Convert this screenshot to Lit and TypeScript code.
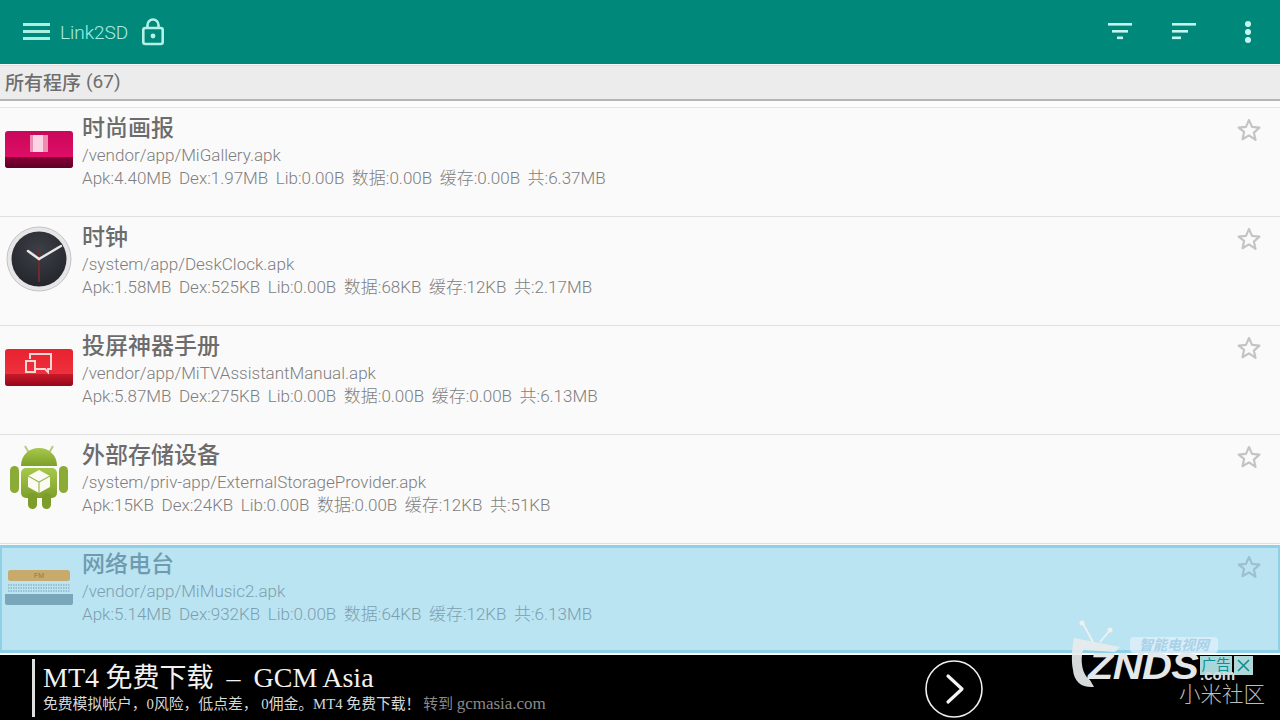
import { LitElement, html, css } from "lit";
import { customElement } from "lit/decorators.js";

const CJK = css`"Noto Sans CJK SC"`;

const iconMagazine = html`<svg viewBox="0 0 68 38" width="68" height="38"><defs><linearGradient id="m1" x1="0" y1="0" x2="0" y2="1"><stop offset="0" stop-color="#c8085a"/><stop offset="1" stop-color="#ea0f6e"/></linearGradient><linearGradient id="m2" x1="0" y1="0" x2="0" y2="1"><stop offset="0" stop-color="#8a0038"/><stop offset="1" stop-color="#5c0026"/></linearGradient></defs><rect width="68" height="37" rx="3" fill="url(#m1)"/><path d="M0 26h68v8a3 3 0 0 1-3 3H3a3 3 0 0 1-3-3z" fill="url(#m2)"/><rect x="25" y="4" width="18" height="17" fill="#f08cb4"/><rect x="28" y="4" width="10" height="17" fill="#fbd3e2"/></svg>`;

const iconClock = html`<svg viewBox="0 0 66 66" width="66" height="66"><defs><radialGradient id="c1" cx=".5" cy=".35" r=".8"><stop offset="0" stop-color="#3e4048"/><stop offset="1" stop-color="#1e2026"/></radialGradient></defs><circle cx="33" cy="33" r="32" fill="#e6e6e8" stroke="#c4c4c6"/><circle cx="33" cy="33" r="27.500" fill="url(#c1)"/><path d="M33 23V56" stroke="#6e2a2c" stroke-width="2" fill="none"/><path d="M33 33 55 20" stroke="#e8e8e8" stroke-width="2.400" stroke-linecap="round"/><path d="M33 33 22 25" stroke="#e8e8e8" stroke-width="2.600" stroke-linecap="round"/></svg>`;

const iconCast = html`<svg viewBox="0 0 68 38" width="68" height="38"><defs><linearGradient id="r1" x1="0" y1="0" x2="0" y2="1"><stop offset="0" stop-color="#e8222f"/><stop offset="1" stop-color="#f03844"/></linearGradient><linearGradient id="r2" x1="0" y1="0" x2="0" y2="1"><stop offset="0" stop-color="#c81a2a"/><stop offset="1" stop-color="#96061a"/></linearGradient></defs><rect width="68" height="37" rx="3" fill="url(#r1)"/><path d="M0 25h68v9a3 3 0 0 1-3 3H3a3 3 0 0 1-3-3z" fill="url(#r2)"/><path d="M25 10V5h21v15h-3v3l-3-3H31M21 12h9v11h-9z" fill="none" stroke="#f9d6d6" stroke-width="2"/></svg>`;

const iconAndroid = html`<svg viewBox="0 0 60 68" width="60" height="68"><defs><linearGradient id="a1" x1="0" y1="0" x2="0" y2="1"><stop offset="0" stop-color="#a6c84a"/><stop offset="1" stop-color="#7ea02c"/></linearGradient></defs><path d="M20 10 16 3M40 10l4-7" stroke="#b8cc80" stroke-width="2"/><path d="M12 23C12 12 20 5 30 5s18 7 18 18z" fill="url(#a1)"/><rect x="12" y="25" width="36" height="30" rx="5" fill="url(#a1)"/><rect x="1" y="23" width="9" height="27" rx="4.500" fill="#8aab36"/><rect x="50" y="23" width="9" height="27" rx="4.500" fill="#8aab36"/><rect x="19" y="50" width="9" height="16" rx="4.500" fill="#7c9c2c"/><rect x="33" y="50" width="9" height="16" rx="4.500" fill="#7c9c2c"/><path d="M30 27 41 33v11l-11 6-11-6V33z" fill="#fbfbf4"/><path d="M19 33l11 6 11-6M30 39v11" stroke="#9cba50" stroke-width="1.200" fill="none"/></svg>`;

const iconRadio = html`<svg viewBox="0 0 68 36" width="68" height="36"><rect x="3" y="0" width="62" height="11" rx="2.500" fill="#c8ab6c"/><text x="34" y="8" text-anchor="middle" font-size="7" font-family="Liberation Sans" fill="#8c7c50">FM</text><path d="M3 15h62M3 18h62M3 21h62" stroke="#8fb4c6" stroke-width="1.400" stroke-dasharray="1.500 1"/><path d="M0 24h68v9a2 2 0 0 1-2 2H2a2 2 0 0 1-2-2z" fill="#79a6b9"/></svg>`;

const apps = [
  { name: "时尚画报", path: "/vendor/app/MiGallery.apk", apk: "4.40MB", dex: "1.97MB", lib: "0.00B", data: "0.00B", cache: "0.00B", total: "6.37MB", icon: iconMagazine, sel: false },
  { name: "时钟", path: "/system/app/DeskClock.apk", apk: "1.58MB", dex: "525KB", lib: "0.00B", data: "68KB", cache: "12KB", total: "2.17MB", icon: iconClock, sel: false },
  { name: "投屏神器手册", path: "/vendor/app/MiTVAssistantManual.apk", apk: "5.87MB", dex: "275KB", lib: "0.00B", data: "0.00B", cache: "0.00B", total: "6.13MB", icon: iconCast, sel: false },
  { name: "外部存储设备", path: "/system/priv-app/ExternalStorageProvider.apk", apk: "15KB", dex: "24KB", lib: "0.00B", data: "0.00B", cache: "12KB", total: "51KB", icon: iconAndroid, sel: false },
  { name: "网络电台", path: "/vendor/app/MiMusic2.apk", apk: "5.14MB", dex: "932KB", lib: "0.00B", data: "64KB", cache: "12KB", total: "6.13MB", icon: iconRadio, sel: true },
];

const star = html`<svg class="star" viewBox="0 0 24 24" width="26" height="26"><path d="M12 2.800l2.800 6.300 6.800.7-5.100 4.600 1.500 6.800L12 17l-6 3.500 1.500-6.800L2.400 9.800l6.800-.7z" fill="none" stroke="#c4c4c4" stroke-width="2" stroke-linejoin="round"/></svg>`;

@customElement("app-root")
export class AppRoot extends LitElement {
  static styles = css`
    :host { display: flex; flex-direction: column; width: 1280px; height: 720px; overflow: hidden; position: relative; background: #fafafa; font-family: Roboto, ${CJK}, sans-serif; }
    .bar { height: 64px; flex: none; background: #00897b; display: flex; align-items: center; padding: 0 0 0 23px; color: #a8f0e4; }
    .bar .title { font-size: 19px; font-weight: 300; margin: 0 13px 0 9px; color: #a8efe4; }
    .bar .acts { margin-left: auto; display: flex; align-items: center; gap: 40px; padding-right: 20px; }
    .sub { height: 30px; flex: none; margin-top: 1px; border-top: 1px solid #d3e6e3; border-bottom: 2px solid #b5b5b5; background: #ececec; display: flex; align-items: center; gap: 5px; padding-left: 5px; padding-bottom: 3px; font-size: 19px; color: #6e6e6e; }
    .sub b { font-weight: 500; }
    .sub span { font-weight: 400; }
    .gap { height: 6px; flex: none; background: #fcfcfc; border-bottom: 1px solid #e4e4e4; }
    .row { height: 108px; flex: none; display: flex; border-bottom: 1px solid #e0e0e0; background: #fafafa; }
    .row.sel { height: 102px; margin-top: 1px; border: 3px solid #8fd0e6; border-left-width: 2px; border-right-width: 2px; background: #bbe4f2; }
    .ico { width: 82px; flex: none; box-sizing: border-box; display: flex; justify-content: center; align-items: center; padding-right: 5px; height: 84px; }
    .mid { flex: 1; padding-top: 3px; color: #808080; }
    .name { font-size: 23px; font-weight: 500; line-height: 36px; color: #6c6c6c; }
    .path { font-size: 17px; font-weight: 300; line-height: 22px; margin-top: -3px; color: #7e7e7e; }
    .stats { font-size: 17px; font-weight: 300; line-height: 24px; display: flex; gap: 7.500px; color: #7e7e7e; }
    .sel .name { color: #6f9bb0; }
    .sel .path, .sel .stats { color: #7b9fb0; }
    .sel .ico { width: 80px; height: 80px; padding-right: 7px; }
    .sel .mid { padding-top: 0; margin-top: -1px; }
    .str { width: 62px; flex: none; display: flex; justify-content: center; padding-top: 9px; box-sizing: border-box; }
    .star { display: block; }
    .sel .str { width: 58px; padding-top: 6px; }
    .sel .str path { stroke: #9cc0cf; }

    .ad { flex: 1; background: #000; display: flex; align-items: center; margin-top: 1px; border-top: 1px solid #fff; position: relative; }
    .ad .rule { width: 3px; height: 58px; background: #e0e0e0; margin: 0 8px 0 32px; flex: none; }
    .ad .txt { display: flex; flex-direction: column; margin-bottom: 3px; }
    .ad .big { font-family: "Liberation Serif", ${CJK}, serif; font-size: 28px; line-height: 36px; color: #f2f2f2; white-space: pre; word-spacing: -0.500px; }
    .ad .big span { font-size: 27px; }
    .ad .small { font-family: "Liberation Serif", ${CJK}, serif; font-size: 14.800px; line-height: 16px; color: #d8d8d8; display: flex; align-items: baseline; gap: 3px; }
    .ad .small span { color: #8a8a8a; }
    .ad .small em { font-style: normal; font-size: 17px; }
    .go { position: absolute; left: 925px; top: 5px; width: 58px; height: 58px; }
    .tag { position: absolute; left: 1200px; top: 1px; height: 19px; display: flex; gap: 2px; }
    .tag b { font-weight: 400; font-size: 14.500px; line-height: 19px; width: 32px; text-align: center; background: #a9d6d8; color: #0c8f94; }
    .tag i { font-style: normal; width: 19px; background: #b0d8d8; display: flex; align-items: center; justify-content: center; }
    .mark { position: absolute; left: 1068px; top: 620px; width: 200px; height: 90px; pointer-events: none; }
    .mark .znds { position: absolute; left: 20px; top: 34px; font-family: "Liberation Sans", sans-serif; font-style: italic; font-weight: 700; font-size: 36px; line-height: 26px; letter-spacing: -0.500px; color: #e4e8e8; transform: scaleX(1.150); transform-origin: left; }
    .mark .com { position: absolute; left: 132px; top: 49px; font-family: "Liberation Sans", sans-serif; font-weight: 700; font-size: 15px; line-height: 11px; color: #d8dcdc; }
    .mark .cn { position: absolute; left: 62px; top: 17px; width: 88px; height: 16px; border-radius: 4px; background: rgba(225, 240, 248, .75); font-style: italic; font-weight: 700; font-size: 14px; line-height: 16px; text-align: center; color: #a8d2e8; }
    .mark svg { position: absolute; left: 0; top: 0; }
    .mark .mi { position: absolute; left: 111px; top: 61px; font-size: 21.500px; font-weight: 300; line-height: 24px; color: #bdbdbd; font-family: ${CJK}, sans-serif; }
  `;

  render() {
    return html`
      <div class="bar">
        <svg width="28" height="18" viewBox="0 0 28 18" fill="#a8f0e4"><rect y="0" width="27" height="3"/><rect y="7" width="27" height="3"/><rect y="14" width="27" height="3"/></svg>
        <span class="title">Link2SD</span>
        <svg width="24" height="30" viewBox="0 0 24 30" fill="none" stroke="#b4f2e8" stroke-width="2.600"><path d="M6.500 11V8a5.500 5.500 0 0 1 11 0v3"/><rect x="2.300" y="11" width="19.400" height="16" rx="2"/><circle cx="12" cy="19" r="2.400" fill="#b4f2e8" stroke="none"/></svg>
        <div class="acts">
          <svg width="24" height="18" viewBox="0 0 24 18" fill="#c4f6ee"><rect width="24" height="2.600"/><rect x="4" y="7" width="16" height="2.600"/><rect x="9" y="13.500" width="6" height="2.600"/></svg>
          <svg width="24" height="18" viewBox="0 0 24 18" fill="#c4f6ee"><rect width="24" height="2.600"/><rect y="7" width="16" height="2.600"/><rect y="13.500" width="9" height="2.600"/></svg>
          <svg width="24" height="24" viewBox="0 0 24 24" fill="#c4f6ee"><circle cx="12" cy="4" r="3"/><circle cx="12" cy="12" r="3"/><circle cx="12" cy="20" r="3"/></svg>
        </div>
      </div>
      <div class="sub"><b>所有程序</b><span>(67)</span></div>
      <div class="gap"></div>
      ${apps.map((a) => html`
        <div class="row ${a.sel ? "sel" : ""}">
          <div class="ico">${a.icon}</div>
          <div class="mid">
            <div class="name">${a.name}</div>
            <div class="path">${a.path}</div>
            <div class="stats"><span>Apk:${a.apk}</span><span>Dex:${a.dex}</span><span>Lib:${a.lib}</span><span>数据:${a.data}</span><span>缓存:${a.cache}</span><span>共:${a.total}</span></div>
          </div>
          <div class="str">${star}</div>
        </div>`)}
      <div class="ad">
        <div class="rule"></div>
        <div class="txt">
          <div class="big">MT4 <span>免费下载</span>  –  GCM Asia</div>
          <div class="small">免费模拟帐户，0风险，低点差， 0佣金。MT4 免费下载！<span>转到 <em>gcmasia.com</em></span></div>
        </div>
        <svg class="go" viewBox="0 0 58 58"><circle cx="29" cy="29" r="28" fill="none" stroke="#f0f0f0" stroke-width="1.600"/><path d="M23 16l14 13-14 13" fill="none" stroke="#f4f4f4" stroke-width="3.200" stroke-linecap="round" stroke-linejoin="round"/></svg>
        <div class="tag"><b>广告</b><i><svg width="13" height="13" viewBox="0 0 13 13"><path d="M1 1l11 11M12 1 1 12" stroke="#0c8f94" stroke-width="1.600"/></svg></i></div>
      </div>
      <div class="mark">
        <svg width="70" height="70" viewBox="0 0 70 70" fill="none"><path d="M14 2 25 22M42 10 32 22" stroke="#eef0f0" stroke-width="1.800"/><circle cx="14" cy="3" r="2.500" fill="#eef0f0"/><circle cx="42" cy="10" r="2.500" fill="#eef0f0"/><path d="M6 18 52 27 47 32 15 30C12 40 14 55 22 60L26 67C14 68 6 62 5 50 3 40 4 28 6 18z" fill="#e8ecec" fill-opacity=".92"/></svg>
        <div class="cn">智能电视网</div>
        <div class="znds">ZNDS</div>
        <div class="com">.com</div>
        <div class="mi">小米社区</div>
      </div>
    `;
  }
}
